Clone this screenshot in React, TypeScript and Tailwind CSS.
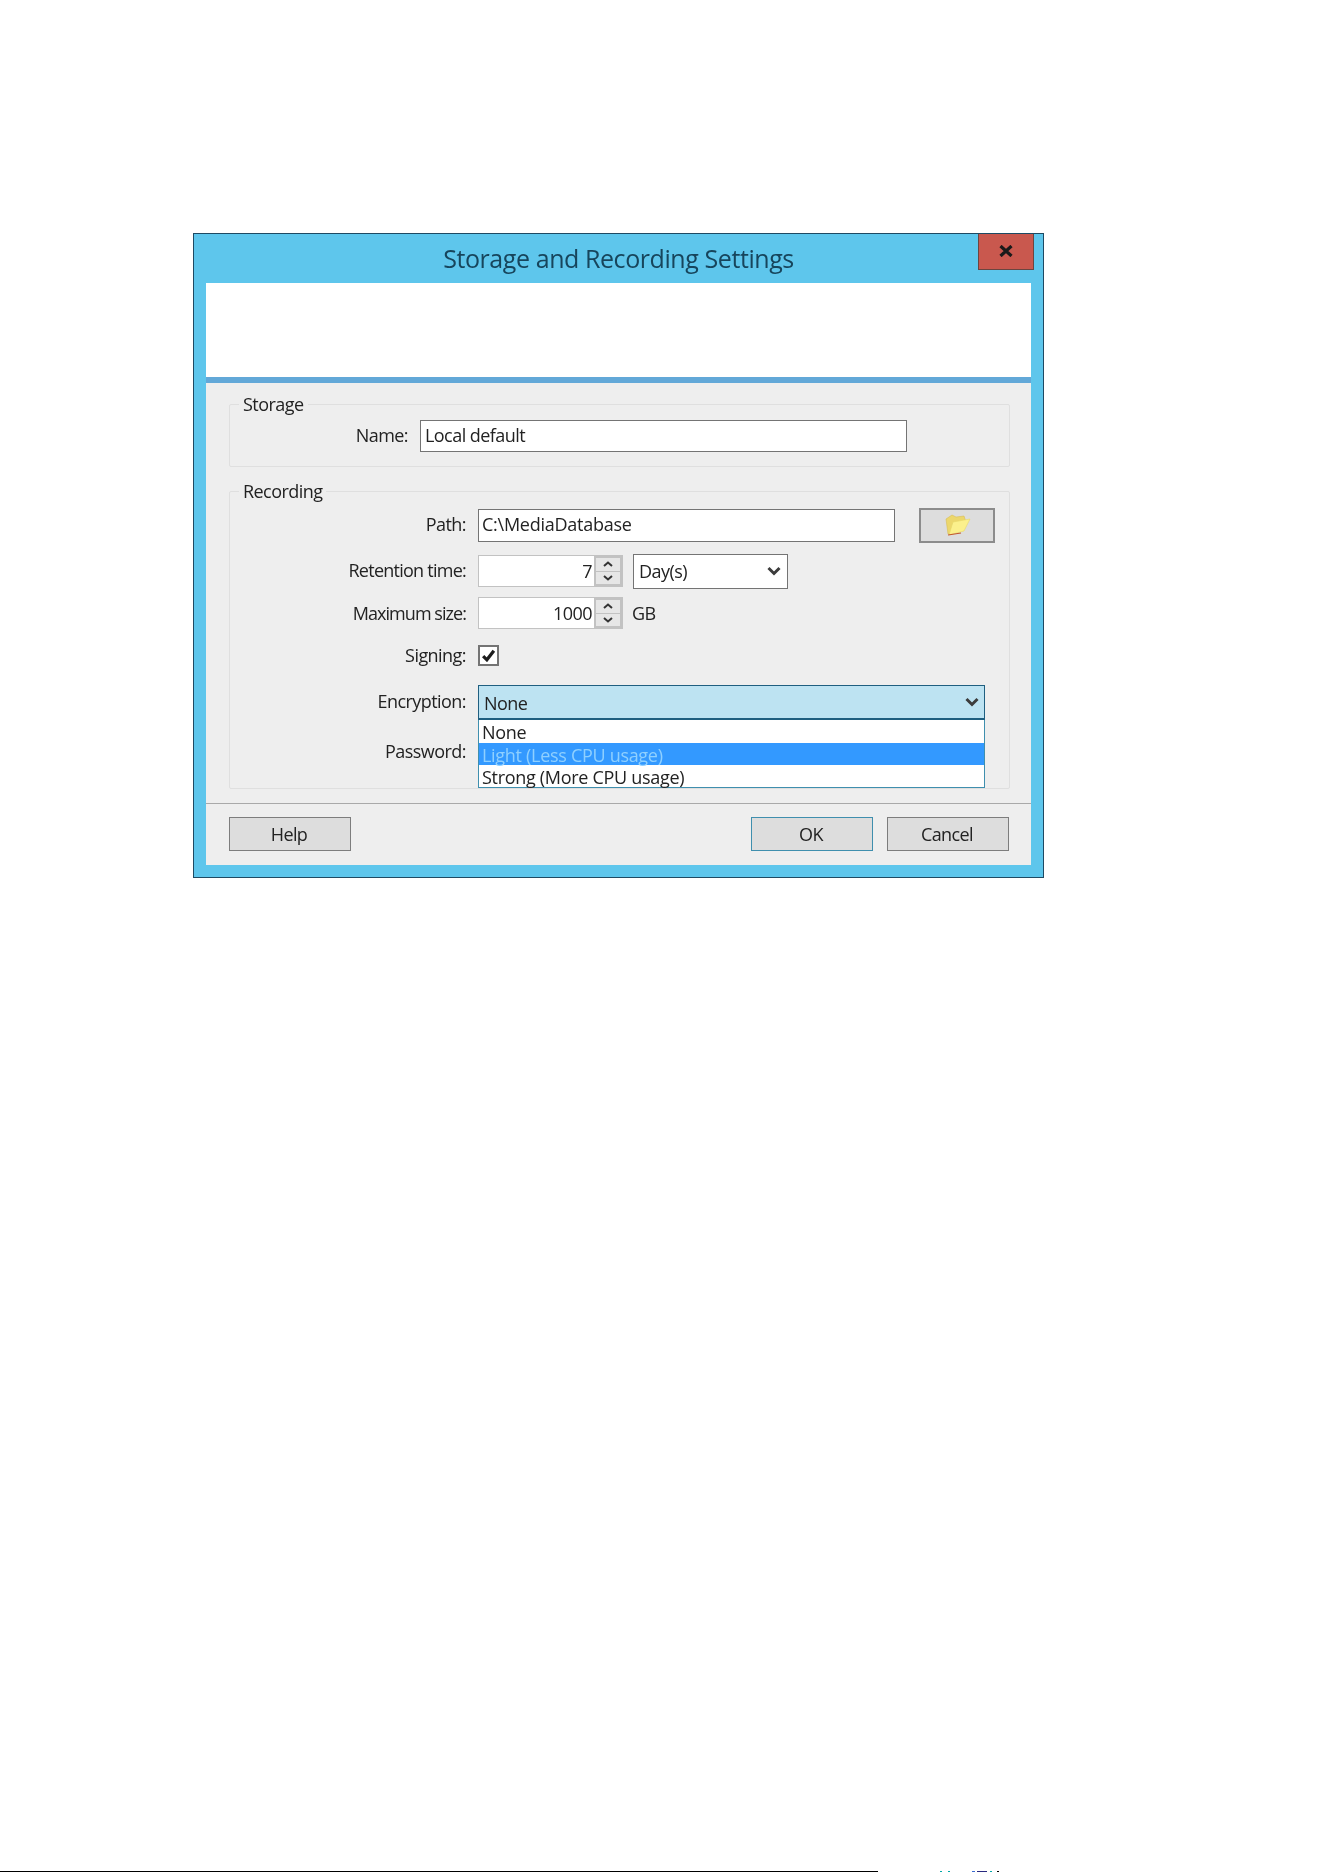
const uiFont = "font-['Open_Sans','Noto_Sans',sans-serif]";

function Chevron({ className }: { className?: string }) {
  return (
    <svg viewBox="0 0 14 10" className={className} fill="none" stroke="#3c3c3c" strokeWidth="3">
      <path d="M1.5 2 L7 7.5 L12.5 2" />
    </svg>
  );
}

function Spinner() {
  return (
    <div className="flex h-full w-[28px] flex-col border-2 border-[#c2c2c2] bg-[#e6e6e6]">
      <div className="flex flex-1 items-center justify-center border-b border-[#c2c2c2]">
        <svg viewBox="0 0 10 6" className="h-[6px] w-[10px]" fill="none" stroke="#333" strokeWidth="2">
          <path d="M1 5 L5 1.5 L9 5" />
        </svg>
      </div>
      <div className="flex flex-1 items-center justify-center">
        <svg viewBox="0 0 10 6" className="h-[6px] w-[10px]" fill="none" stroke="#333" strokeWidth="2">
          <path d="M1 1 L5 4.5 L9 1" />
        </svg>
      </div>
    </div>
  );
}

function FolderIcon() {
  return (
    <svg viewBox="0 0 27 22" className="h-[22px] w-[27px]">
      <path d="M2 5 L8 1 L12 3 L20 2 L22 8 L9 9 L7 19 L4 20 Z" fill="#ecd76c" stroke="#d8bd55" strokeWidth="0.6" />
      <path d="M9 8 L26 5 L20 17 L5 21 Z" fill="#fbf08c" stroke="#e8d86a" strokeWidth="0.6" />
      <path d="M4 21 L17 19" stroke="#c2572c" strokeWidth="1.2" />
    </svg>
  );
}

function NumberField({ value }: { value: string }) {
  return (
    <div className="flex h-[32px] w-[145px] border border-[#c2c2c2] bg-white">
      <span className="flex-1 pr-[2px] text-right leading-[30px]">{value}</span>
      <Spinner />
    </div>
  );
}

function FormLabel({ children, className }: { children: React.ReactNode; className?: string }) {
  return <span className={`w-[248px] shrink-0 pr-[12px] text-right ${className ?? ''}`}>{children}</span>;
}

function DialogButton({ label, focused }: { label: string; focused?: boolean }) {
  return (
    <button
      className={`flex h-[34px] w-[122px] items-center justify-center border bg-[#dddddd] pr-[2px] text-[18px] tracking-[-0.6px] text-[#222] ${
        focused ? 'border-[#3f8fae]' : 'border-[#7d7d7d]'
      }`}
    >
      {label}
    </button>
  );
}

export default function App() {
  return (
    <div className={`flex min-h-[1872px] flex-col bg-white ${uiFont} text-[18px] tracking-[-0.55px] text-[#222]`}>
      <div className="flex-1 pl-[193px] pt-[233px]">
        <div className="flex h-[645px] w-[851px] flex-col border border-[#1e4a63] bg-[#5ec6ec] px-[12px] pb-[12px] blur-[0.4px]">
          {/* title bar */}
          <div className="relative flex h-[49px] shrink-0 items-center justify-center">
            <span className="text-[25px] tracking-[-0.42px] text-[#17455c]">Storage and Recording Settings</span>
            <div className="absolute right-[-3px] top-0 flex h-[36px] w-[56px] items-center justify-center border border-[#6b4540] border-t-0 bg-[#c9584e]">
              <svg viewBox="0 0 14 12" className="mb-[2px] h-[12px] w-[14px]" fill="none" stroke="#1a1a1a" strokeWidth="3.2">
                <path d="M1.5 1 L12.5 11 M12.5 1 L1.5 11" />
              </svg>
            </div>
          </div>

          {/* banner */}
          <div className="h-[94px] shrink-0 border-b-[6px] border-[#62a8d8] bg-white [box-sizing:content-box]" />

          <div className="relative flex flex-1 flex-col bg-[#eeeeee]">
            <div className="flex-1 pl-[23px] pr-[21px] pt-[21px]">
              {/* Storage group */}
              <div className="relative h-[63px] rounded-[2px] border border-[#dfdfdf]">
                <span className="absolute left-[9px] top-[-13px] bg-[#eeeeee] px-[4px] leading-[24px]">Storage</span>
                <div className="flex h-full items-center">
                  <FormLabel className="!w-[190px]">Name:</FormLabel>
                  <div className="flex h-[32px] w-[487px] items-center border border-[#747474] bg-white pl-[4px]">Local default</div>
                </div>
              </div>

              {/* Recording group */}
              <div className="relative mt-[24px] h-[298px] rounded-[2px] border border-[#dfdfdf]">
                <span className="absolute left-[9px] top-[-13px] bg-[#eeeeee] px-[4px] leading-[24px]">Recording</span>
                <div className="flex flex-col pt-[16px]">
                  <div className="flex h-[34px] items-center">
                    <FormLabel className="pb-[2px]">Path:</FormLabel>
                    <div className="flex h-[33px] w-[417px] items-center border border-[#747474] bg-white pb-[2px] pl-[3px] tracking-[-0.25px]">C:\MediaDatabase</div>
                    <button className="ml-[24px] flex h-[35px] w-[76px] items-center justify-center border-2 border-[#8c8c8c] bg-[#dddddd]">
                      <FolderIcon />
                    </button>
                  </div>
                  <div className="mt-[12px] flex h-[34px] items-center">
                    <FormLabel className="pb-[2px] tracking-[-0.75px]">Retention time:</FormLabel>
                    <NumberField value="7" />
                    <div className="ml-[10px] flex h-[35px] w-[155px] items-center justify-between border border-[#747474] bg-white pl-[5px] pr-[6px]">
                      <span>Day(s)</span>
                      <Chevron className="h-[10px] w-[14px]" />
                    </div>
                  </div>
                  <div className="mt-[8px] flex h-[34px] items-center">
                    <FormLabel className="tracking-[-0.95px]">Maximum size:</FormLabel>
                    <NumberField value="1000" />
                    <span className="ml-[9px]">GB</span>
                  </div>
                  <div className="mt-[14px] flex h-[22px] items-center">
                    <FormLabel>Signing:</FormLabel>
                    <div className="flex h-[21px] w-[21px] items-center justify-center border-2 border-[#747474] bg-white">
                      <svg viewBox="0 0 14 12" className="h-[13px] w-[15px]" fill="none" stroke="#1c1c1c" strokeWidth="3">
                        <path d="M2 6.5 L5.5 10 L12 1.5" />
                      </svg>
                    </div>
                  </div>
                  <div className="mt-[19px] flex h-[35px] items-center">
                    <FormLabel className="pb-[2px]">Encryption:</FormLabel>
                    <div className="flex h-[35px] w-[507px] items-center justify-between border border-b-2 border-[#1f5f80] bg-[#bde3f2] pl-[5px] pr-[5px]">
                      <span className="pt-[3px]">None</span>
                      <Chevron className="h-[10px] w-[14px]" />
                    </div>
                  </div>
                  <div className="relative mt-[16px] flex h-[30px] items-center">
                    <FormLabel>Password:</FormLabel>
                    <div className="absolute left-[248px] top-[-16px] flex h-[68px] w-[507px] flex-col border border-t-0 border-[#3f8fae] bg-white leading-[24px] tracking-[-0.3px]">
                      <div className="h-[23px] pl-[3px]">None</div>
                      <div className="h-[22px] bg-[#3399ff] pl-[3px] text-[#8fd0ff]">Light (Less CPU usage)</div>
                      <div className="h-[22px] pl-[3px]">Strong (More CPU usage)</div>
                    </div>
                  </div>
                </div>
              </div>
            </div>

            {/* footer */}
            <div className="mt-[14px] flex h-[62px] shrink-0 items-center justify-between border-t border-[#a9a9a9] pb-[14px] pl-[23px] pr-[22px] pt-[13px]">
              <DialogButton label="Help" />
              <div className="flex gap-[14px]">
                <DialogButton label="OK" focused />
                <DialogButton label="Cancel" />
              </div>
            </div>
          </div>
        </div>
      </div>
      {/* cut-off footer rule and the tops of clipped page text */}
      <div className="flex h-[1px] w-full">
        <div className="h-full w-[878px] bg-black" />
        <div className="ml-[62px] h-full w-[2px] bg-[#00a8a8]" />
        <div className="ml-[6px] h-full w-[2px] bg-[#00a8a8]" />
        <div className="ml-[22px] h-full w-[3px] bg-[#3a6ad0]" />
        <div className="ml-[2px] h-full w-[10px] bg-[#2a2a80]" />
        <div className="ml-[3px] h-full w-[2px] bg-[#00a8a8]" />
        <div className="ml-[5px] h-full w-[2px] bg-black" />
      </div>
    </div>
  );
}
